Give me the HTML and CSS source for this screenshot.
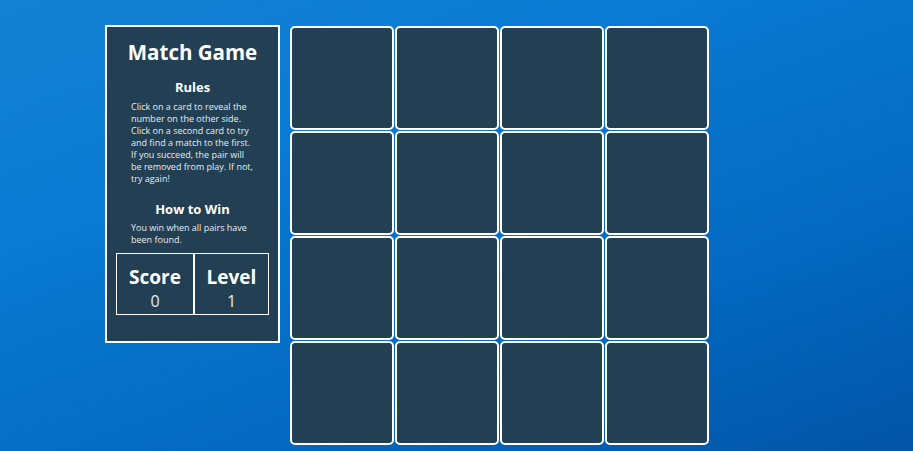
FILE: index.html
```html
<!DOCTYPE html>
<html>
<head>
<meta charset="utf-8">
<link rel="stylesheet" href="styles.css">
</head>
<body>
<div class="page">
  <aside class="panel">
    <h1 class="title">Match Game</h1>
    <h2 class="subtitle">Rules</h2>
    <p class="text">Click on a card to reveal the number on the other side. Click on a second card to try and find a match to the first. If you succeed, the pair will be removed from play. If not, try again!</p>
    <h2 class="subtitle win">How to Win</h2>
    <p class="text text-win">You win when all pairs have been found.</p>
    <div class="stats">
      <div class="stat">
        <div class="stat-label">Score</div>
        <div class="stat-value">0</div>
      </div>
      <div class="stat">
        <div class="stat-label">Level</div>
        <div class="stat-value">1</div>
      </div>
    </div>
  </aside>
  <main class="board">
    <div class="card"></div><div class="card"></div><div class="card"></div><div class="card"></div>
    <div class="card"></div><div class="card"></div><div class="card"></div><div class="card"></div>
    <div class="card"></div><div class="card"></div><div class="card"></div><div class="card"></div>
    <div class="card"></div><div class="card"></div><div class="card"></div><div class="card"></div>
  </main>
</div>
</body>
</html>
```
FILE: styles.css
```css
html, body {
  margin: 0;
  height: 100%;
}
body {
  background: linear-gradient(160deg, #1381d2 0%, #0a7bd3 30%, #0368c0 70%, #0254a6 100%);
  font-family: "Open Sans", "Liberation Sans", sans-serif;
  color: #fff;
  overflow: hidden;
}
.page {
  display: flex;
  align-items: flex-start;
  gap: 10px;
  padding: 25px 0 0 105px;
}
.panel {
  box-sizing: border-box;
  width: 175px;
  height: 318px;
  border: 2px solid #fff;
  background: #223f53;
  padding: 0 9px;
  text-align: center;
}
.title {
  margin: 11px 0 0;
  font-size: 20.5px;
  font-weight: 700;
  line-height: 28px;
}
.subtitle {
  margin: 12px 0 0;
  font-size: 13px;
  font-weight: 700;
  line-height: 18px;
}
.subtitle.win {
  margin-top: 15px;
}
.text {
  margin: 5px 0 0;
  padding: 0 13px 0 15px;
  text-align: left;
  font-size: 9px;
  line-height: 12px;
  color: #e8edf0;
}
.text-win {
  margin-top: 4px;
}
.stats {
  display: grid;
  grid-template-columns: 76px 1fr;
  margin-top: 7px;
  border: 1.5px solid #fff;
  height: 62px;
  box-sizing: border-box;
}
.stat {
  display: flex;
  flex-direction: column;
  align-items: center;
  padding-top: 11px;
}
.stat + .stat {
  border-left: 2px solid #fff;
}
.stat-label {
  font-size: 19px;
  font-weight: 700;
  line-height: 24px;
}
.stat-value {
  margin-top: 1px;
  font-size: 16px;
  line-height: 22px;
  color: #e8edf0;
}
.board {
  margin-top: 1px;
  display: grid;
  grid-template-columns: repeat(4, 104px);
  grid-auto-rows: 104px;
  gap: 1px;
}
.card {
  box-sizing: border-box;
  border: 2px solid #fff;
  border-radius: 5px;
  background: #223f53;
}
```
